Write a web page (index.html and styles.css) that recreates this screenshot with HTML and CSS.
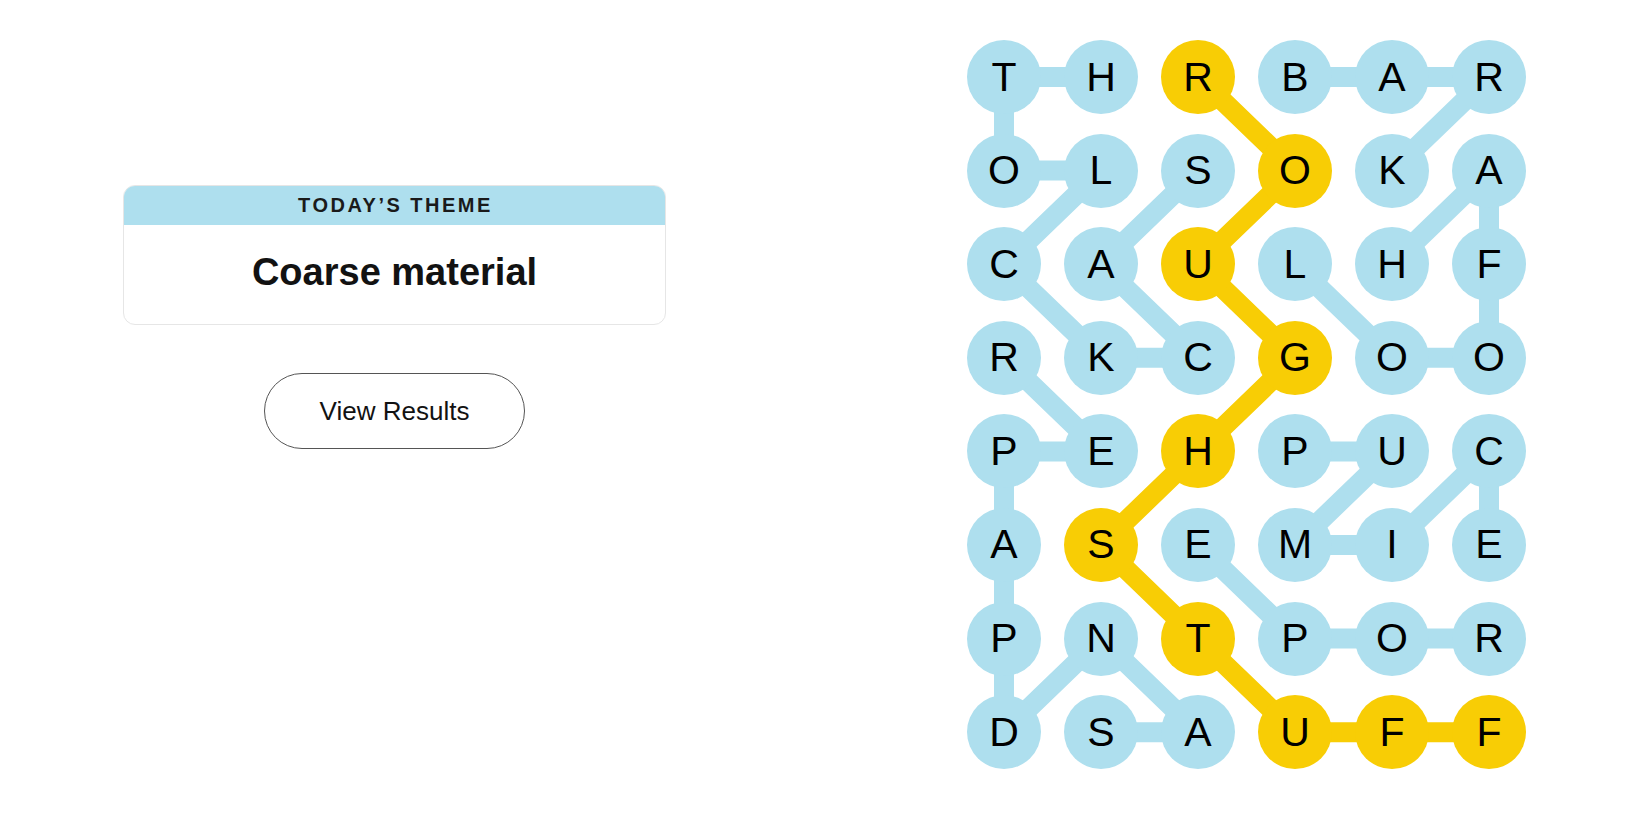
FILE: index.html
```html
<!DOCTYPE html>
<html lang="en">
<head>
<meta charset="utf-8">
<title>Strands</title>
<link rel="stylesheet" href="styles.css">
</head>
<body>
<main class="page">
  <section class="sidebar">
    <div class="theme-card">
      <div class="theme-label">Today’s Theme</div>
      <div class="theme-title">Coarse material</div>
    </div>
    <button class="results-btn" type="button">View Results</button>
  </section>

  <section class="board">
    <svg class="lines" width="559" height="730" viewBox="0 0 559 730" aria-hidden="true">
      <g class="blue-line">
        <polyline points="231,130.6 134,224.2 231,317.8 134,317.8 37,224.2 134,130.6 37,130.6 37,37 134,37"/>
        <polyline points="134,692.2 231,692.2 134,598.6 37,692.2 37,598.6 37,505 37,411.4 134,411.4 37,317.8"/>
        <polyline points="328,37 425,37 522,37 425,130.6"/>
        <polyline points="328,224.2 425,317.8 522,317.8 522,224.2 522,130.6 425,224.2"/>
        <polyline points="328,411.4 425,411.4 328,505 425,505 522,411.4 522,505"/>
        <polyline points="522,598.6 425,598.6 328,598.6 231,505"/>
      </g>
      <g class="gold-line">
        <polyline points="231,37 328,130.6 231,224.2 328,317.8 231,411.4 134,505 231,598.6 328,692.2 425,692.2 522,692.2"/>
      </g>
    </svg>

    <div class="cell blue">T</div><div class="cell blue">H</div><div class="cell gold">R</div><div class="cell blue">B</div><div class="cell blue">A</div><div class="cell blue">R</div>
    <div class="cell blue">O</div><div class="cell blue">L</div><div class="cell blue">S</div><div class="cell gold">O</div><div class="cell blue">K</div><div class="cell blue">A</div>
    <div class="cell blue">C</div><div class="cell blue">A</div><div class="cell gold">U</div><div class="cell blue">L</div><div class="cell blue">H</div><div class="cell blue">F</div>
    <div class="cell blue">R</div><div class="cell blue">K</div><div class="cell blue">C</div><div class="cell gold">G</div><div class="cell blue">O</div><div class="cell blue">O</div>
    <div class="cell blue">P</div><div class="cell blue">E</div><div class="cell gold">H</div><div class="cell blue">P</div><div class="cell blue">U</div><div class="cell blue">C</div>
    <div class="cell blue">A</div><div class="cell gold">S</div><div class="cell blue">E</div><div class="cell blue">M</div><div class="cell blue">I</div><div class="cell blue">E</div>
    <div class="cell blue">P</div><div class="cell blue">N</div><div class="cell gold">T</div><div class="cell blue">P</div><div class="cell blue">O</div><div class="cell blue">R</div>
    <div class="cell blue">D</div><div class="cell blue">S</div><div class="cell blue">A</div><div class="cell gold">U</div><div class="cell gold">F</div><div class="cell gold">F</div>
  </section>
</main>
</body>
</html>
```

FILE: styles.css
```css
html, body {
  margin: 0;
  padding: 0;
  background: #ffffff;
}

body {
  font-family: "Liberation Sans", Arial, sans-serif;
  color: #121212;
}

.page {
  display: flex;
  align-items: flex-start;
  padding: 40px 0 0 123px;
}

.sidebar {
  width: 543px;
  margin-top: 145px;
  display: flex;
  flex-direction: column;
  align-items: center;
  gap: 48px;
}

.theme-card {
  width: 100%;
  box-sizing: border-box;
  border: 1px solid #e6e6e6;
  border-radius: 12px;
  overflow: hidden;
}

.theme-label {
  height: 39px;
  background: #aedfee;
  display: flex;
  align-items: center;
  justify-content: center;
  padding-left: 2px;
  font-size: 20px;
  font-weight: 700;
  letter-spacing: 2.5px;
  text-transform: uppercase;
  color: #1a1a1a;
}

.theme-title {
  height: 99px;
  box-sizing: border-box;
  padding-bottom: 4px;
  display: flex;
  align-items: center;
  justify-content: center;
  font-size: 38px;
  font-weight: 700;
  color: #121212;
}

.results-btn {
  width: 261px;
  height: 76px;
  box-sizing: border-box;
  border: 1px solid #555555;
  border-radius: 38px;
  background: #ffffff;
  font-family: "Liberation Sans", Arial, sans-serif;
  font-size: 26px;
  color: #121212;
  padding: 0;
}

.board {
  position: relative;
  margin-left: 301px;
  display: grid;
  grid-template-columns: repeat(6, 74px);
  grid-auto-rows: 74px;
  column-gap: 23px;
  row-gap: 19.6px;
}

.lines {
  position: absolute;
  left: 0;
  top: 0;
  z-index: 0;
}

.lines polyline {
  fill: none;
  stroke-width: 20;
  stroke-linejoin: round;
  stroke-linecap: round;
}

.blue-line polyline {
  stroke: #aedfee;
}

.gold-line polyline {
  stroke: #f8cd05;
}

.cell {
  position: relative;
  z-index: 1;
  width: 74px;
  height: 74px;
  border-radius: 50%;
  display: flex;
  align-items: center;
  justify-content: center;
  font-size: 41px;
  color: #000000;
}

.cell.blue {
  background: #aedfee;
}

.cell.gold {
  background: #f8cd05;
}
```
